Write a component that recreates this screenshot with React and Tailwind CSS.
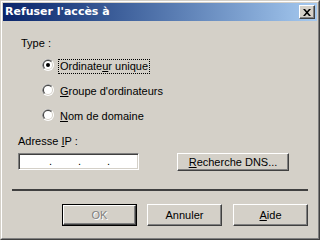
import React from "react";

function Radio({ checked }) {
  return (
    <svg width="12" height="12" viewBox="0 0 12 12" className="shrink-0">
      <circle cx="6" cy="6" r="6" fill="#ffffff" />
      <path d="M1.76 10.24 A6 6 0 0 1 10.24 1.76 Z" fill="#808080" />
      <circle cx="6" cy="6" r="5" fill="#d4d0c8" />
      <path d="M2.46 9.54 A5 5 0 0 1 9.54 2.46 Z" fill="#404040" />
      <circle cx="6" cy="6" r="4" fill="#ffffff" />
      {checked && <circle cx="6" cy="6" r="2" fill="#000000" />}
    </svg>
  );
}

const btn =
  "flex items-center justify-center bg-[#d4d0c8] border border-t-white border-l-white border-r-[#404040] border-b-[#404040] shadow-[inset_-1px_-1px_0_#808080]";

export default function App() {
  return (
    <div
      className="w-[320px] h-[240px] bg-[#d4d0c8] border border-t-[#d4d0c8] border-l-[#d4d0c8] border-r-[#404040] border-b-[#404040] text-[11px] leading-[13px] text-black"
      style={{ fontFamily: '"Liberation Sans", Arial, sans-serif' }}
    >
      <div className="h-full border border-t-white border-l-white border-r-[#808080] border-b-[#808080]">
        <div className="h-full p-px flex flex-col">
          {/* Title bar */}
          <div className="h-[18px] flex items-center bg-linear-to-r from-[#0a246a] to-[#a6caf0] pl-[2px] pr-[2px]">
            <span
              className="text-white font-bold text-[12px] leading-[14px] flex-1"
              style={{ fontFamily: '"DejaVu Sans", Verdana, sans-serif', fontSize: "11px" }}
            >
              Refuser l'accès à
            </span>
            <div className="w-[16px] h-[14px] bg-[#d4d0c8] border border-t-white border-l-white border-r-[#404040] border-b-[#404040] shadow-[inset_-1px_-1px_0_#808080] flex items-center justify-center">
              <svg width="8" height="7" viewBox="0 0 8 7">
                <path d="M0 0h2l2 2.2L6 0h2L5 3.5 8 7H6L4 4.8 2 7H0l3-3.5z" fill="#000" />
              </svg>
            </div>
          </div>

          {/* Content */}
          <div className="flex flex-col">
            <div className="mt-[16px] pl-[18px] h-[13px]">Type :</div>

            <div className="mt-[9px] ml-[39px] flex items-start h-[15px]">
              <Radio checked />
              <div className="ml-[4px] h-[15px] border border-dotted border-black pl-px pr-px flex items-center">
                Ordinate<span className="underline">u</span>r unique
              </div>
            </div>
            <div className="mt-[10px] ml-[39px] flex items-start h-[15px]">
              <Radio />
              <div className="ml-[4px] h-[15px] border border-transparent pl-px pr-px flex items-center">
                <span className="underline">G</span>roupe d'ordinateurs
              </div>
            </div>
            <div className="mt-[10px] ml-[39px] flex items-start h-[15px]">
              <Radio />
              <div className="ml-[4px] h-[15px] border border-transparent pl-px pr-px flex items-center">
                <span className="underline">N</span>om de domaine
              </div>
            </div>

            <div className="mt-[11px] pl-[15px] h-[13px]">
              Adresse <span className="underline">I</span>P :
            </div>

            <div className="mt-[5px] flex items-start">
              <div className="ml-[15px] w-[121px] h-[17px] bg-white border border-t-[#808080] border-l-[#808080] border-r-white border-b-white shadow-[inset_1px_1px_0_#404040,inset_-1px_-1px_0_#d4d0c8] flex items-center pl-[17px]">
                <span className="w-[29px] text-center">.</span>
                <span className="w-[29px] text-center">.</span>
                <span className="w-[29px] text-center">.</span>
              </div>
              <div className={"ml-[38px] w-[112px] h-[18px] " + btn}>
                <span>
                  <span className="underline">R</span>echerche DNS...
                </span>
              </div>
            </div>

            <div className="mt-[18px] ml-[9px] w-[296px] h-[2px] bg-[#404040]" />

            <div className="mt-[13px] flex">
              <div className="ml-[59px] w-[75px] h-[22px] border border-black">
                <div className={"w-full h-full " + btn}>
                  <span className="text-[#808080] [text-shadow:1px_1px_0_#ffffff]">OK</span>
                </div>
              </div>
              <div className={"ml-[10px] w-[75px] h-[22px] " + btn}>Annuler</div>
              <div className={"ml-[11px] w-[75px] h-[22px] " + btn}>
                <span>
                  <span className="underline">A</span>ide
                </span>
              </div>
            </div>
          </div>
        </div>
      </div>
    </div>
  );
}
